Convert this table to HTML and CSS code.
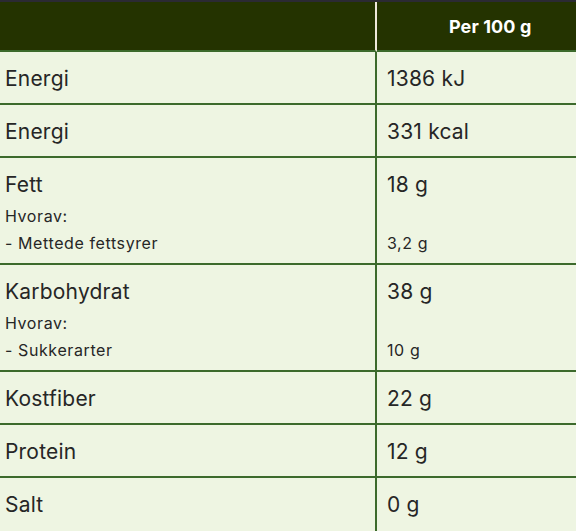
FILE: index.html
```html
<!DOCTYPE html>
<html lang="no">
<head>
<meta charset="utf-8">
<title>Næringsinnhold</title>
<link rel="stylesheet" href="styles.css">
</head>
<body>
<table class="nutrition">
  <colgroup>
    <col class="col-label">
    <col class="col-value">
  </colgroup>
  <thead>
    <tr>
      <th class="head-label"></th>
      <th class="head-value">Per 100 g</th>
    </tr>
  </thead>
  <tbody>
    <tr>
      <td class="label">Energi</td>
      <td class="value">1386 kJ</td>
    </tr>
    <tr>
      <td class="label">Energi</td>
      <td class="value">331 kcal</td>
    </tr>
    <tr class="multi">
      <td class="label">Fett
        <div class="sub">
          <div class="sub-line">Hvorav:</div>
          <div class="sub-line">- Mettede fettsyrer</div>
        </div>
      </td>
      <td class="value">18 g
        <div class="sub">
          <div class="sub-line"></div>
          <div class="sub-line">3,2 g</div>
        </div>
      </td>
    </tr>
    <tr class="multi">
      <td class="label">Karbohydrat
        <div class="sub">
          <div class="sub-line">Hvorav:</div>
          <div class="sub-line">- Sukkerarter</div>
        </div>
      </td>
      <td class="value">38 g
        <div class="sub">
          <div class="sub-line"></div>
          <div class="sub-line">10 g</div>
        </div>
      </td>
    </tr>
    <tr>
      <td class="label">Kostfiber</td>
      <td class="value">22 g</td>
    </tr>
    <tr>
      <td class="label">Protein</td>
      <td class="value">12 g</td>
    </tr>
    <tr class="last">
      <td class="label">Salt</td>
      <td class="value">0 g</td>
    </tr>
  </tbody>
</table>
</body>
</html>
```
FILE: styles.css
```css
html, body {
  margin: 0;
  padding: 0;
  background: #eef5e2;
  overflow: hidden;
}

body {
  font-family: Inter, "Liberation Sans", sans-serif;
  color: #262626;
}

.nutrition {
  width: 576px;
  table-layout: fixed;
  border-collapse: separate;
  border-spacing: 0;
  border-top: 2px solid #2b2a33;
}

.col-label { width: 377px; }
.col-value { width: 199px; }

thead th {
  background: #243300;
  height: 50px;
  padding: 0;
  border-bottom: 2px solid #3c6a2c;
  box-sizing: border-box;
}

.head-label {
  border-right: 2px solid #ede7da;
}

.head-value {
  color: #ffffff;
  font-weight: 700;
  font-size: 18px;
  letter-spacing: 0.1px;
  text-align: left;
  padding-left: 72px !important;
}

tbody td {
  vertical-align: top;
  font-size: 21px;
  line-height: 24px;
  letter-spacing: 0.2px;
  padding: 15px 5px 12px;
  border-bottom: 2px solid #3c6a2c;
  font-weight: 400;
}

tbody td.label {
  border-right: 2px solid #3c6a2c;
}

tbody td.value {
  padding-left: 10px;
}

.multi td {
  padding-bottom: 9px;
}

.last td {
  border-bottom: none;
  padding-bottom: 20px;
}

.sub {
  margin-top: 8px;
  display: flex;
  flex-direction: column;
  gap: 5px;
}

.sub-line {
  font-size: 16px;
  line-height: 22px;
  height: 22px;
  letter-spacing: 0.6px;
}
```
